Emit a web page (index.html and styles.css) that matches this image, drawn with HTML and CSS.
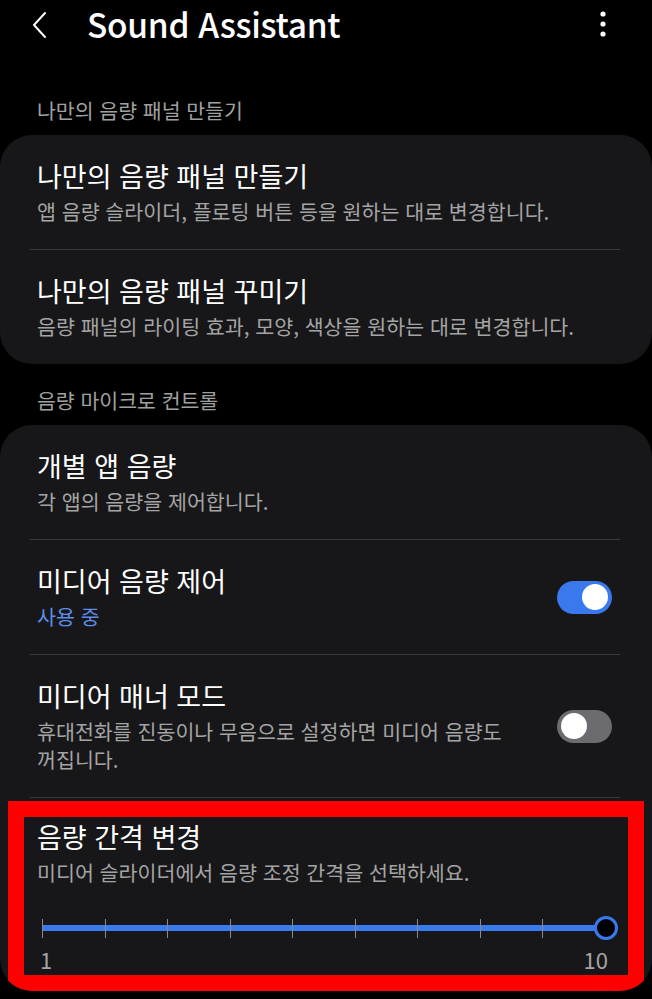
FILE: index.html
```html
<!DOCTYPE html>
<html lang="ko">
<head>
    <meta charset="UTF-8">
    <meta name="viewport" content="width=device-width, initial-scale=1.0">
    <title>Sound Assistant</title>
    <link rel="stylesheet" href="styles.css">
</head>
<body>
    <!-- Top bar -->
    <header class="top-bar">
        <svg class="back" width="20" height="28" viewBox="0 0 20 28">
            <path d="M15 2 L4 14 L15 26" fill="none" stroke="#fff" stroke-width="2" stroke-linecap="round" stroke-linejoin="round"/>
        </svg>
        <h1 class="title">Sound Assistant</h1>
        <svg class="more" width="10" height="28" viewBox="0 0 10 28">
            <circle cx="5" cy="4" r="2.6" fill="#fff"/>
            <circle cx="5" cy="14" r="2.6" fill="#fff"/>
            <circle cx="5" cy="24" r="2.6" fill="#fff"/>
        </svg>
    </header>

    <!-- Section 1 -->
    <div class="section-title first">나만의 음량 패널 만들기</div>
    <div class="card">
        <div class="row">
            <div class="row-text">
                <div class="row-title">나만의 음량 패널 만들기</div>
                <div class="row-sub">앱 음량 슬라이더, 플로팅 버튼 등을 원하는 대로 변경합니다.</div>
            </div>
        </div>
        <div class="divider"></div>
        <div class="row">
            <div class="row-text">
                <div class="row-title">나만의 음량 패널 꾸미기</div>
                <div class="row-sub">음량 패널의 라이팅 효과, 모양, 색상을 원하는 대로 변경합니다.</div>
            </div>
        </div>
    </div>

    <!-- Section 2 -->
    <div class="section-title">음량 마이크로 컨트롤</div>
    <div class="card">
        <div class="row">
            <div class="row-text">
                <div class="row-title">개별 앱 음량</div>
                <div class="row-sub">각 앱의 음량을 제어합니다.</div>
            </div>
        </div>
        <div class="divider"></div>
        <div class="row">
            <div class="row-text">
                <div class="row-title">미디어 음량 제어</div>
                <div class="row-sub active">사용 중</div>
            </div>
            <div class="toggle on"><span class="knob"></span></div>
        </div>
        <div class="divider"></div>
        <div class="row">
            <div class="row-text">
                <div class="row-title">미디어 매너 모드</div>
                <div class="row-sub">휴대전화를 진동이나 무음으로 설정하면 미디어 음량도 꺼집니다.</div>
            </div>
            <div class="toggle"><span class="knob"></span></div>
        </div>
        <div class="divider"></div>
        <div class="row slider-row highlighted">
            <div class="row-text">
                <div class="row-title">음량 간격 변경</div>
                <div class="row-sub">미디어 슬라이더에서 음량 조정 간격을 선택하세요.</div>
                <div class="slider">
                    <span class="tick"></span><span class="tick"></span><span class="tick"></span>
                    <span class="tick"></span><span class="tick"></span><span class="tick"></span>
                    <span class="tick"></span><span class="tick"></span><span class="tick"></span>
                    <span class="tick"></span>
                    <span class="thumb"></span>
                </div>
                <div class="slider-labels">
                    <span>1</span>
                    <span>10</span>
                </div>
            </div>
        </div>
    </div>
</body>
</html>
```

FILE: styles.css
```css
body {
    margin: 0;
    background-color: #000;
    color: #fff;
    font-family: "Noto Sans CJK KR", "Noto Sans", sans-serif;
    word-break: keep-all;
}

.top-bar {
    display: flex;
    align-items: center;
    height: 48px;
    padding: 0 44px 0 30px;
}

.back {
    margin-top: 2px;
}

.title {
    flex: 1;
    margin: 0 0 0 37px;
    font-size: 33.5px;
    font-weight: 500;
    letter-spacing: -0.3px;
    line-height: 48px;
}

.section-title {
    margin: 24px 0 13px 37px;
    font-size: 20.5px;
    line-height: 24px;
    color: #a0a0a0;
}

.section-title.first {
    margin-top: 50px;
}

.card {
    background-color: #171719;
    border-radius: 32px;
    overflow: hidden;
}

.row {
    display: flex;
    align-items: center;
    padding: 24px 40px 24px 37px;
}

.row-text {
    flex: 1;
}

.row-title {
    font-size: 27px;
    line-height: 34px;
}

.row-sub {
    margin-top: 4px;
    font-size: 20.6px;
    line-height: 28px;
    color: #a4a4a4;
    padding-right: 30px;
}

.row-sub.active {
    color: #5b8fe9;
}

.divider {
    height: 1px;
    margin: 0 32px 0 30px;
    background-color: #3a3a3c;
}

/* Switches */
.toggle {
    display: flex;
    align-items: center;
    width: 55px;
    height: 33px;
    padding: 0 4px;
    box-sizing: border-box;
    border-radius: 17px;
    background-color: #6b6b70;
}

.toggle.on {
    justify-content: flex-end;
    background-color: #3a78ee;
}

.knob {
    width: 26px;
    height: 26px;
    border-radius: 50%;
    background-color: #fff;
}

/* Slider row */
.slider-row {
    position: relative;
    padding-top: 22px;
    padding-bottom: 19px;
}

.slider-row .row-sub {
    padding-right: 0;
}

.slider {
    position: relative;
    display: flex;
    justify-content: space-between;
    align-items: center;
    height: 24px;
    margin: 30px 6px 0 5px;
    background: linear-gradient(#3a78ee, #3a78ee) center / 100% 6px no-repeat;
}

.tick {
    width: 1px;
    height: 19px;
    background-color: #8a8a8e;
}

.thumb {
    position: absolute;
    right: -12px;
    top: 0;
    width: 24px;
    height: 24px;
    box-sizing: border-box;
    border: 3px solid #3a78ee;
    border-radius: 50%;
    background-color: #000;
}

.slider-labels {
    display: flex;
    justify-content: space-between;
    margin: 6px 4px 0 3px;
    font-size: 22px;
    line-height: 26px;
    color: #a4a4a4;
}

/* red annotation frame */
.highlighted::after {
    content: "";
    position: absolute;
    left: 8px;
    right: 8px;
    top: 3px;
    bottom: 0;
    border: 16px solid #ff0000;
}
```
